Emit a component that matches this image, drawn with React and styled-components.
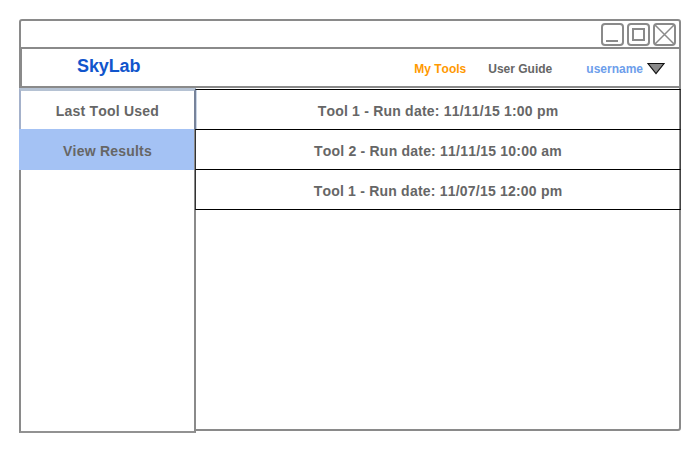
import React from "react";
import styled, { createGlobalStyle } from "styled-components";

const GlobalStyle = createGlobalStyle`
  * { box-sizing: border-box; }
  body {
    margin: 0;
    background: #fff;
    font-family: "Liberation Sans", Arial, sans-serif;
    font-weight: 700;
    font-kerning: none;
    color: #666;
  }
`;

const Page = styled.div`
  width: 700px;
  height: 452px;
  padding: 19px;
`;

const Window = styled.main`
  display: flex;
  flex-direction: column;
  width: 662px;
  height: 412px;
  border: 2px solid #8a8a8a;
  border-radius: 3px;
`;

const TitleBar = styled.div`
  display: flex;
  flex: none;
  justify-content: flex-end;
  align-items: flex-start;
  gap: 2px;
  height: 28px;
  padding: 2px 2px 0 0;
  border-bottom: 2px solid #8a8a8a;
`;

const ControlIcon = styled.svg`
  width: 24px;
  height: 24px;
  fill: none;
  stroke: #8a8a8a;
  stroke-width: 2;
`;

const Header = styled.header`
  display: flex;
  flex: none;
  align-items: center;
  height: 39px;
  padding: 0 14px 0 55px;
  border-left: 1px solid #8a8a8a;
  border-bottom: 2px solid #8a8a8a;
`;

const Logo = styled.div`
  margin: -3px auto 0 0;
  font-size: 18px;
  line-height: 20px;
  letter-spacing: -0.1px;
  color: #1155cc;
`;

const Nav = styled.nav`
  display: flex;
  align-items: center;
  padding-top: 3px;
  font-size: 12px;
  line-height: 14px;
`;

const NavLink = styled.span`
  margin-right: ${(p) => p.$gap}px;
  color: ${(p) => p.$color || "#666"};
`;

const Caret = styled.svg`
  width: 18px;
  height: 13px;
  margin-bottom: 2px;
`;

const Body = styled.div`
  display: flex;
  flex: 1;
  min-height: 0;
`;

const Sidebar = styled.aside`
  flex: none;
  width: 177px;
  height: 345px;
  margin-left: -2px;
  border: 2px solid #8a8a8a;
  border-top: 0;
  border-bottom-color: #929292;
  background: #fff;
`;

const SideItem = styled.div`
  height: 41px;
  margin: 0 0 0 -2px;
  text-align: center;
  font-size: 14px;
  line-height: 20px;
  letter-spacing: 0.21px;
  padding: ${(p) => (p.$active ? "12px 0 0 2px" : "11px 0 0 2px")};
  background: ${(p) => (p.$active ? "#a4c2f4" : "#fff")};
  border: solid ${(p) => (p.$active ? "#a4c2f4" : "#a4b1ca")};
  border-width: ${(p) => (p.$active ? "0" : "2px 0 0 2px")};
`;

const FirstItem = styled(SideItem)`
  margin-right: -2px;
  border-top: 3px solid #b5c2d3;
  border-right: 2px solid #77839a;
  padding: 10px 0 0;
`;

const Results = styled.section`
  flex: 1;
  margin: 1px -2px 0 -1px;
`;

const ResultRow = styled.div`
  height: 41px;
  margin-bottom: -1px;
  padding: 11px 0 0;
  border: 1px solid #000;
  border-left-color: ${(p) => (p.$first ? "#77839a" : "#333")};
  border-right-color: #444;
  box-shadow: ${(p) => (p.$first ? "inset 1px 0 #c9d5e6" : "none")};
  text-align: center;
  font-size: 14px;
  line-height: 20px;
  letter-spacing: 0.21px;
`;

const rows = [
  "Tool 1 - Run date: 11/11/15 1:00 pm",
  "Tool 2 - Run date: 11/11/15 10:00 am",
  "Tool 1 - Run date: 11/07/15 12:00 pm",
];

function WindowControl({ children }) {
  return (
    <ControlIcon viewBox="0 0 24 24">
      <rect x="1" y="1" width="21" height="21" rx="3" />
      {children}
    </ControlIcon>
  );
}

export default function App() {
  return (
    <Page>
      <GlobalStyle />
      <Window>
        <TitleBar>
          <WindowControl><path d="M5 18h12" /></WindowControl>
          <WindowControl><rect x="6" y="6" width="11" height="11" /></WindowControl>
          <WindowControl><path d="M1.5 1.5 21.5 21.5M21.5 1.5 1.5 21.5" strokeWidth="1.5" /></WindowControl>
        </TitleBar>
        <Header>
          <Logo>SkyLab</Logo>
          <Nav>
            <NavLink $color="#ff9900" $gap={22}>My Tools</NavLink>
            <NavLink $gap={34}>User Guide</NavLink>
            <NavLink $color="#6d9eeb" $gap={4}>username</NavLink>
            <Caret viewBox="0 0 18 13">
              <path d="M1 1.5H17L9 11.5Z" fill="#8a8a8a" stroke="#111" strokeWidth="1.2" />
            </Caret>
          </Nav>
        </Header>
        <Body>
          <Sidebar>
            <FirstItem>Last Tool Used</FirstItem>
            <SideItem $active>View Results</SideItem>
          </Sidebar>
          <Results>
            {rows.map((row, index) => (
              <ResultRow key={row} $first={index === 0}>{row}</ResultRow>
            ))}
          </Results>
        </Body>
      </Window>
    </Page>
  );
}
